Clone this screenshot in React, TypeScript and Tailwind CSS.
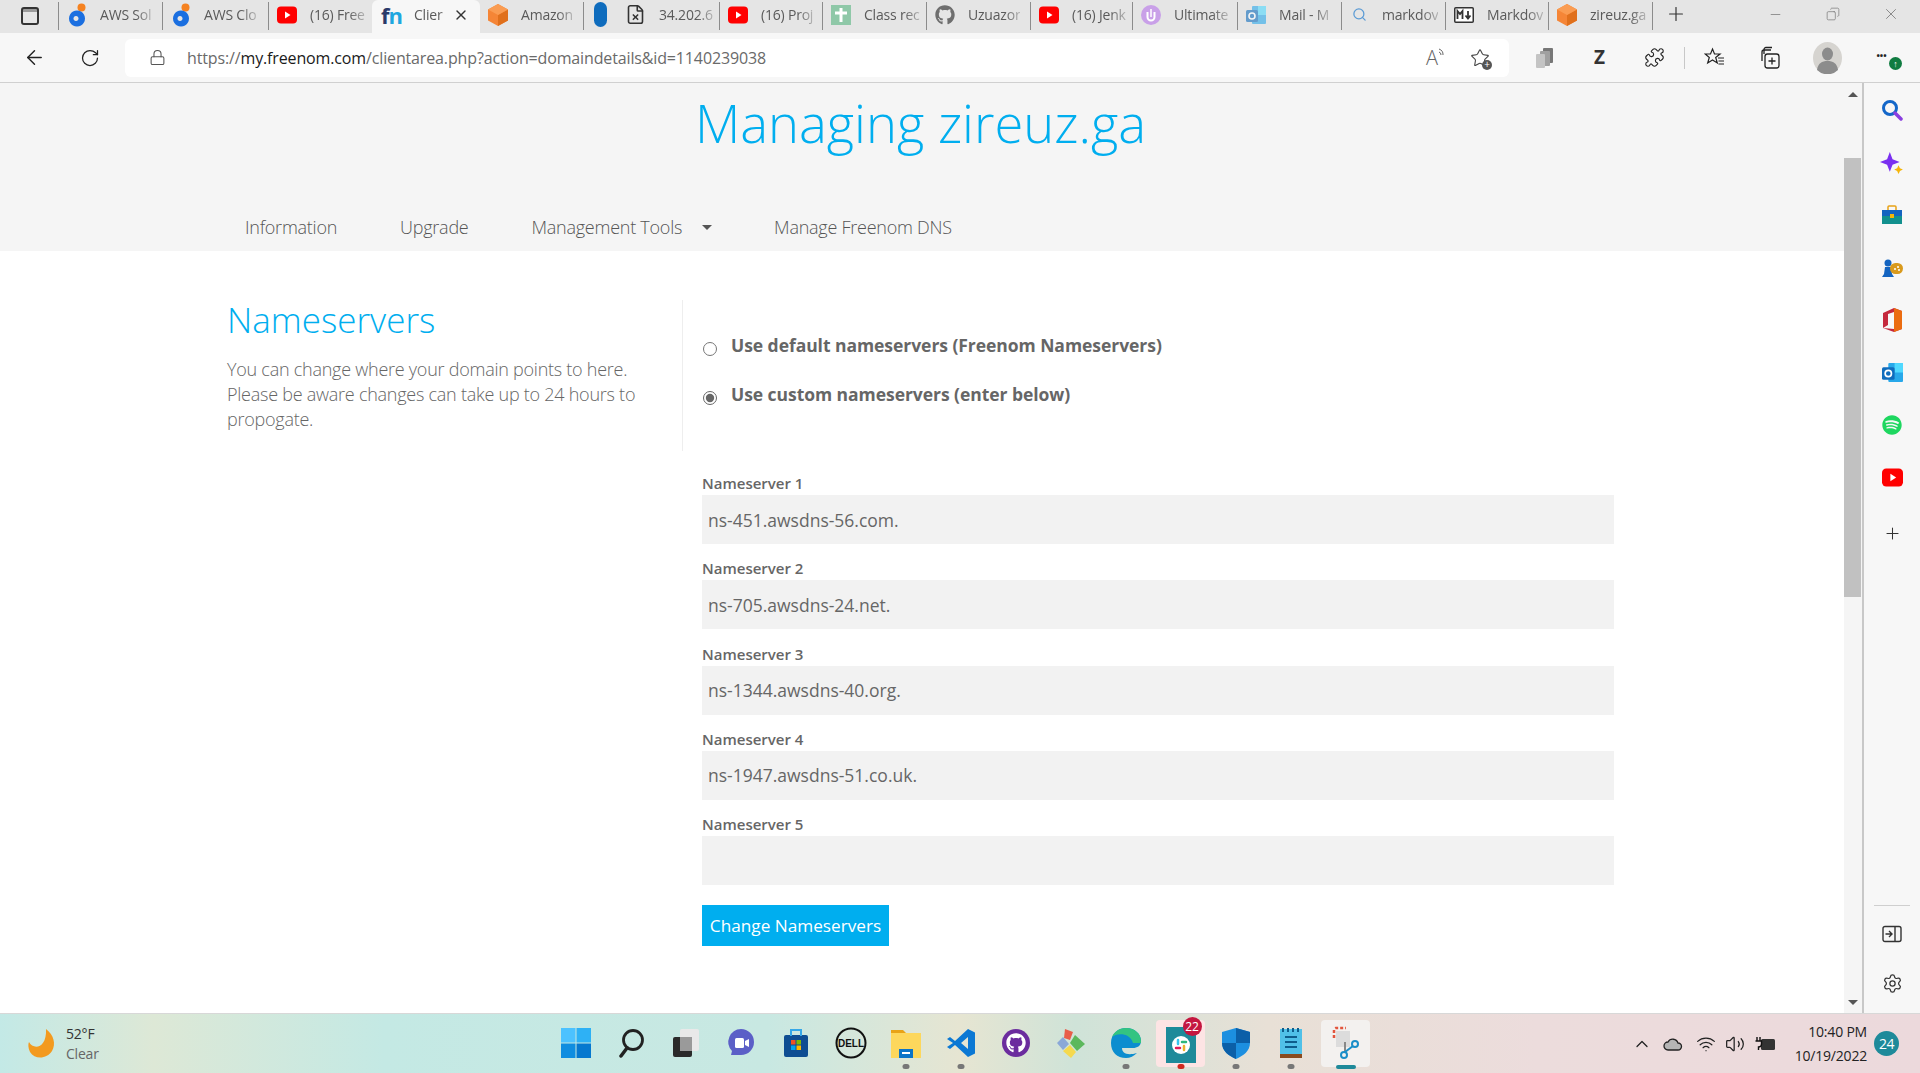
import React from "react";
import { ArrowLeft, RotateCw, Lock, Plus, X, Minus, Copy, Star, Puzzle, ChevronUp, Wifi, Volume2, Search, Settings, FileX } from "lucide-react";
import { FaGithub, FaSpotify } from "react-icons/fa";

const Yt = ({ s = 20 }: { s?: number }) => (
  <svg width={s} height={s} viewBox="0 0 20 20"><rect x="0" y="1.500" width="20" height="17" rx="4" fill="#f00" /><path d="M8 6.500l5.500 3.500L8 13.500z" fill="#fff" /></svg>
);
const Aws = () => (
  <svg width="20" height="24" viewBox="0 0 20 24"><circle cx="14.500" cy="4.500" r="4" fill="#f58220" /><path d="M10 7.500a8 8 0 1 0 .01 0z M9 13a2.500 2.500 0 1 1-.01 0z" fill="#1b6fe0" fillRule="evenodd" /></svg>
);
const Cube = () => (
  <svg width="20" height="22" viewBox="0 0 20 22"><path d="M10 0l10 5.500v11L10 22 0 16.500v-11z" fill="#f58536" /><path d="M10 11l10-5.500v11L10 22z" fill="#e0701c" /><path d="M10 0l10 5.500L10 11 0 5.500z" fill="#fa9c52" /></svg>
);
const Fn = () => (
  <span className="block text-[22px] font-bold leading-[28px] tracking-[-1px] font-['Open_Sans',sans-serif]"><span className="text-[#2a3a6a]">f</span><span className="text-[#1fa7e0]">n</span></span>
);
const Pill = () => <div className="w-[13px] h-[25px] rounded-full bg-[#0f6cbd] mr-[18px] ml-[2px]" />;
const ClassI = () => (
  <svg width="20" height="20" viewBox="0 0 20 20"><rect width="20" height="20" fill="#8fc8a8" /><path d="M10 3v14M4 8h12" stroke="#fff" strokeWidth="3" /></svg>
);
const Ultimate = () => (
  <svg width="20" height="20" viewBox="0 0 20 20"><circle cx="10" cy="10" r="10" fill="#c9a0e8" /><path d="M6.500 7v5a3.500 3.500 0 0 0 7 0V7" stroke="#fff" strokeWidth="2" fill="none" /><path d="M10 4v8" stroke="#fff" strokeWidth="1.500" /></svg>
);
const Outlook = ({ s = 20, faded = false }: { s?: number; faded?: boolean }) => (
  <svg width={s} height={s} viewBox="0 0 20 20" opacity={faded ? 0.6 : 1}><rect x="6" y="1" width="14" height="18" rx="1" fill="#28a8ea" /><rect x="12" y="1" width="8" height="9" fill="#50d9ff" /><rect x="0" y="5" width="12" height="12" rx="1.500" fill="#0f6cbd" /><circle cx="6" cy="11" r="3" fill="none" stroke="#fff" strokeWidth="1.600" /></svg>
);
const Md = () => (
  <svg width="20" height="16" viewBox="0 0 20 16"><rect x=".75" y=".75" width="18.500" height="14.500" rx="1" fill="#fff" stroke="#333" strokeWidth="1.500" /><path d="M3.500 12V4l2.500 3 2.500-3v8M14 4v7M11.500 8.500L14 11.500l2.500-3" fill="none" stroke="#333" strokeWidth="1.800" /></svg>
);

const tabs: { w: string; icon: React.ReactNode; label: string; active?: boolean }[] = [
  { w: "w-[104px]", icon: <Aws />, label: "AWS Sol" },
  { w: "w-[106px]", icon: <Aws />, label: "AWS Clo" },
  { w: "w-[104px]", icon: <Yt />, label: "(16) Free" },
  { w: "w-[108px]", icon: <Fn />, label: "Clier", active: true },
  { w: "w-[104px]", icon: <Cube />, label: "Amazon" },
  { w: "w-[136px]", icon: <><Pill /><FileX size={21} strokeWidth={1.800} className="text-[#333]" /></>, label: "34.202.6" },
  { w: "w-[103px]", icon: <Yt />, label: "(16) Proj" },
  { w: "w-[104px]", icon: <ClassI />, label: "Class rec" },
  { w: "w-[104px]", icon: <FaGithub size={20} className="text-[#6e6e6e]" />, label: "Uzuazor" },
  { w: "w-[102px]", icon: <Yt />, label: "(16) Jenk" },
  { w: "w-[105px]", icon: <Ultimate />, label: "Ultimate" },
  { w: "w-[104px]", icon: <Outlook faded />, label: "Mail - M" },
  { w: "w-[104px]", icon: <Search size={15} className="text-[#5b9bd5] mx-[2px]" />, label: "markdov" },
  { w: "w-[103px]", icon: <Md />, label: "Markdov" },
  { w: "w-[104px]", icon: <Cube />, label: "zireuz.ga" },
];

function TabBar() {
  return (
    <div className="h-[33px] flex items-stretch bg-[#e5e5e5] text-[14px] text-[#5a5a5a] shrink-0">
      <div className="w-[59px] flex items-center pl-[21px] border-r border-[#8c8c8c] mt-[2px] mb-[3px]">
        <div className="w-[18px] h-[18px] border-2 border-[#333] rounded-[3px] bg-[#9a9a9a] overflow-hidden"><div className="h-[11px] mt-[3px] bg-[#e5e5e5]" /></div>
      </div>
      {tabs.map((t, i) =>
        t.active ? (
          <div key={i} className={`${t.w} flex items-center pl-[9px] pr-[11px] pb-[4px] bg-[#f7f7f7] rounded-t-[6px] -ml-px`}>
            <span className="w-[28px] shrink-0">{t.icon}</span>
            <span className="flex-1 whitespace-nowrap ml-[5px] tracking-[-0.2px] [mask-image:linear-gradient(90deg,#000_60%,#0006)]">{t.label}</span>
            <X size={16} className="text-[#333] shrink-0" />
          </div>
        ) : (
          <div key={i} className={`${t.w} flex items-center pl-[8px] pb-[3px] mt-[2px] mb-[3px] ${tabs[i + 1]?.active ? "" : "border-r border-[#8c8c8c]"}`}>
            <span className="flex items-center shrink-0 mr-[13px]">{t.icon}</span>
            <span className="whitespace-nowrap tracking-[-0.2px] [mask-image:linear-gradient(90deg,#000_70%,#0005)]">{t.label}</span>
          </div>
        )
      )}
      <div className="w-[46px] flex items-center justify-center pb-[5px]"><Plus size={22} strokeWidth={1.300} className="text-[#333]" /></div>
      <div className="flex-1 flex items-center justify-end text-[#777] pb-[5px]">
        <div className="w-[58px] flex justify-center"><Minus size={15} strokeWidth={1.200} /></div>
        <div className="w-[58px] flex justify-center"><Copy size={14} strokeWidth={1.200} className="scale-x-[-1]" /></div>
        <div className="w-[58px] flex justify-center"><X size={18} strokeWidth={1.100} /></div>
      </div>
    </div>
  );
}

function ToolBar() {
  return (
    <div className="h-[50px] flex items-center bg-[#f7f7f7] border-b border-[#d0d0d0] shrink-0">
      <div className="w-[69px] flex justify-center"><ArrowLeft size={23} strokeWidth={1.500} className="text-[#222]" /></div>
      <div className="w-[42px] flex justify-center"><RotateCw size={20} strokeWidth={1.500} className="text-[#222]" /></div>
      <div className="w-[1384px] ml-[14px] h-[38px] bg-white rounded-[6px] flex items-center">
        <Lock size={17} strokeWidth={1.500} className="ml-[24px] text-[#555]" />
        <div className="ml-[21px] text-[16px] text-[#6a6a6a] font-['Open_Sans',sans-serif] flex-1 tracking-[-0.14px]">https://<span className="text-[#1a1a1a]">my.freenom.com</span>/clientarea.php?action=domaindetails&amp;id=1140239038</div>
        <span className="relative flex items-start mr-[24px] text-[#666]">
          <span className="text-[20px] font-light leading-[22px]">A</span>
          <svg width="8" height="10" viewBox="0 0 8 10" className="mt-[1px]"><path d="M1 1a6 6 0 0 1 4 6M1 4a3 3 0 0 1 2 3" fill="none" stroke="#666" strokeWidth="1" /></svg>
        </span>
        <span className="relative mr-[19px]"><Star size={20} strokeWidth={1.300} className="text-[#444]" /><span className="absolute -right-[2px] -bottom-[2px] w-[10px] h-[10px] rounded-full bg-[#555] text-white text-[10px] leading-[9px] text-center">+</span></span>
      </div>
      <div className="w-[55px] ml-[8px] flex justify-center">
        <svg width="20" height="22" viewBox="0 0 20 22"><rect x="8" y="1" width="10" height="15" rx="1" fill="#777" /><rect x="5" y="4" width="10" height="15" rx="1" fill="#a0a0a0" /><rect x="1" y="7" width="9" height="14" rx="1" fill="#c4c4c4" /></svg>
      </div>
      <div className="w-[55px] flex justify-center text-[19px] font-bold text-[#333] font-['Open_Sans',sans-serif]">Z</div>
      <div className="w-[55px] flex justify-center"><Puzzle size={21} strokeWidth={1.300} className="text-[#222]" /></div>
      <div className="w-px h-[22px] bg-[#c8c8c8] mx-[2px]" />
      <div className="w-[55px] flex justify-center">
        <svg width="22" height="22" viewBox="0 0 22 22" fill="none" stroke="#222" strokeWidth="1.200"><path d="M8.500 2l2 5h5.500l-4.300 3.500 1.600 5.500-4.800-3-4.800 3 1.600-5.500L1.200 7h5.300z" /><path d="M14 11h6M14.500 14h5.500M14.500 17h5.500" /></svg>
      </div>
      <div className="w-[55px] flex justify-center">
        <svg width="22" height="24" viewBox="0 0 22 24" fill="none" stroke="#222" strokeWidth="1.300"><path d="M3 15V6a2 2 0 0 1 2-2h7" /><rect x="6" y="8" width="14" height="14" rx="2.500" /><path d="M13 11.500v7M9.500 15h7" /><path d="M5 8V3.500a2 2 0 0 1 2-2h6" /></svg>
      </div>
      <div className="w-[55px] ml-[3px] flex justify-center">
        <svg width="29" height="32" viewBox="0 0 29 32"><ellipse cx="14.500" cy="16" rx="14.500" ry="16" fill="#d6d4d0" /><ellipse cx="14.500" cy="12" rx="5.500" ry="6.500" fill="#8c8c8c" /><path d="M4 28c1-7 5-9 10.500-9S24 21 25 28a15 15 0 0 1-21 0z" fill="#8c8c8c" /></svg>
      </div>
      <div className="w-[47px] flex justify-center relative text-[#222] font-bold text-[9px] leading-none">
        <span className="-mt-[4px] ml-[6px]">•••</span>
        <span className="absolute left-[34px] top-[2px] w-[13px] h-[13px] rounded-full bg-[#107c41] text-white text-[9px] leading-[13px] text-center">↑</span>
      </div>
    </div>
  );
}

const inputs = ["ns-451.awsdns-56.com.", "ns-705.awsdns-24.net.", "ns-1344.awsdns-40.org.", "ns-1947.awsdns-51.co.uk.", ""];

function Page() {
  return (
    <div className="flex-1 min-w-0 bg-white font-['Open_Sans',sans-serif] text-[#666] overflow-hidden">
      <div className="h-[168px] bg-[#f5f5f5]">
        <h1 className="text-center text-[52.500px] font-light text-[#00aeef] leading-[70px] pt-[5px] pr-[3px] h-[105px]">Managing zireuz.ga</h1>
        <nav className="flex items-center h-[63px] pl-[245px] pt-[16px] text-[18px] font-light text-[#555] tracking-[-0.25px]">
          <span>Information</span>
          <span className="ml-[63px]">Upgrade</span>
          <span className="ml-[63px]">Management Tools</span>
          <span className="ml-[20px] w-0 h-0 border-x-[5px] border-x-transparent border-t-[5px] border-t-[#555]" />
          <span className="ml-[62px]">Manage Freenom DNS</span>
        </nav>
      </div>
      <div className="flex pt-[49px]">
        <div className="w-[682px] pl-[227px] pr-[40px] shrink-0">
          <h2 className="text-[35px] font-light text-[#00aeef] leading-[40px]">Nameservers</h2>
          <p className="text-[18px] font-light leading-[25px] mt-[17px] tracking-[-0.25px] text-[#666]">You can change where your domain points to here. Please be aware changes can take up to 24 hours to propogate.</p>
        </div>
        <div className="flex-1 min-w-0">
          <div className="border-l border-[#eee] h-[151px] pl-[20px] pt-[32px] text-[17.500px] font-bold tracking-[-0.05px]">
            <label className="flex items-start h-[49px]">
              <input type="radio" name="ns" readOnly className="w-[14px] h-[14px] mt-[10px] accent-[#666]" />
              <span className="ml-[14px] leading-[26px]">Use default nameservers (Freenom Nameservers)</span>
            </label>
            <label className="flex items-start">
              <input type="radio" name="ns" defaultChecked className="w-[14px] h-[14px] mt-[10px] accent-[#666]" />
              <span className="ml-[14px] leading-[26px]">Use custom nameservers (enter below)</span>
            </label>
          </div>
          <div className="w-[912px] ml-[20px] mt-[21px]">
            {inputs.map((v, i) => (
              <div key={i} className="mb-[13.250px]">
                <div className="text-[15px] font-semibold leading-[23px] h-[23px]">Nameserver {i + 1}</div>
                <input readOnly value={v} className="block w-full h-[49px] bg-[#f2f2f2] px-[6px] text-[17.500px] text-[#666] outline-none" />
              </div>
            ))}
            <button className="mt-[7px] w-[187px] h-[41px] bg-[#00aeef] text-white text-[17.200px]">Change Nameservers</button>
          </div>
        </div>
      </div>
    </div>
  );
}

function ScrollBar() {
  return (
    <div className="w-[20px] shrink-0 bg-[#f5f5f5] border-r-2 border-[#c8c8c8] flex flex-col items-center pr-[1px]">
      <div className="h-[75px] pt-[9px] w-full flex justify-center"><div className="w-0 h-0 border-x-[5px] border-x-transparent border-b-[5px] border-b-[#555]" /></div>
      <div className="h-[439px] w-[17px] bg-[#c1c1c1]" />
      <div className="flex-1 w-full flex items-end justify-center pb-[8px]"><div className="w-0 h-0 border-x-[5px] border-x-transparent border-t-[5px] border-t-[#555]" /></div>
    </div>
  );
}

function SideBar() {
  const items: React.ReactNode[] = [
    <svg width="22" height="22" viewBox="0 0 22 22"><circle cx="9" cy="9" r="6.500" fill="none" stroke="#1467c9" strokeWidth="3" /><path d="M14 14l6 6" stroke="#8a3fe0" strokeWidth="3.500" strokeLinecap="round" /></svg>,
    <svg width="24" height="24" viewBox="0 0 22 22"><path d="M9 1l2.500 6.500L18 10l-6.500 2.500L9 19l-2.500-6.500L0 10l6.500-2.500z" fill="#7a2ff0" /><path d="M17 13l1.300 2.700L21 17l-2.700 1.300L17 21l-1.300-2.700L13 17l2.700-1.300z" fill="#f5b50a" /></svg>,
    <svg width="22" height="20" viewBox="0 0 22 20"><rect x="7" y="1" width="8" height="5" rx="1" fill="none" stroke="#e8a317" strokeWidth="1.500" /><rect x="1" y="5" width="20" height="6" fill="#1464c0" /><rect x="1" y="11" width="20" height="8" fill="#12908e" /><rect x="9" y="9" width="4" height="4" fill="#f5b50a" /></svg>,
    <svg width="22" height="20" viewBox="0 0 22 20"><circle cx="7" cy="5" r="3.500" fill="#1464c0" /><path d="M4 9h6l1 7 2 3H1l2-3z" fill="#1464c0" /><rect x="9" y="5" width="13" height="11" rx="5.500" fill="#d99a1c" /><circle cx="17" cy="9" r="1" fill="#fff" /><circle cx="14" cy="11" r="1" fill="#fff" /><circle cx="18" cy="12" r="1" fill="#fff" /></svg>,
    <svg width="21" height="24" viewBox="0 0 21 24"><path d="M12 0l8 3v18l-8 3-11-4 11 1V4L6 6v11l-5 3V5z" fill="#c5283d" /><path d="M12 0l8 3v18l-8 3z" fill="#eb6c10" /></svg>,
    <Outlook s={21} />,
    <FaSpotify size={20} className="text-[#1ed760]" />,
    <Yt s={21} />,
    <Plus size={19} strokeWidth={1.300} className="text-[#333]" />,
  ];
  return (
    <div className="w-[56px] shrink-0 bg-[#f7f7f7] flex flex-col items-center pt-[1px]">
      <div className="flex flex-col items-center">
        {items.map((n, i) => (
          <div key={i} className={`${i === 8 ? "h-[58px]" : "h-[52.500px]"} w-[56px] flex items-center justify-center`}>{n}</div>
        ))}
      </div>
      <div className="flex-1" />
      <div className="w-[36px] h-px bg-[#cfcfcf]" />
      <div className="h-[52px] mt-[2px] flex items-center">
        <svg width="20" height="18" viewBox="0 0 20 18" fill="none" stroke="#333" strokeWidth="1.400"><rect x="1" y="1.500" width="18" height="15" rx="2" /><path d="M13 1.500v15M3.500 9h6M7 6l3 3-3 3" /></svg>
      </div>
      <div className="h-[53px] pb-[6px] flex items-center"><Settings size={21} strokeWidth={1.400} className="text-[#333]" /></div>
    </div>
  );
}

function TaskBar() {
  const Win = (
    <svg width="30" height="30" viewBox="0 0 30 30"><rect width="14.500" height="14.500" fill="#4cc2ff" /><rect x="15.500" width="14.500" height="14.500" fill="#2eb1f5" /><rect y="15.500" width="14.500" height="14.500" fill="#0f8de0" /><rect x="15.500" y="15.500" width="14.500" height="14.500" fill="#0678cf" /></svg>
  );
  const Mag = (
    <svg width="30" height="30" viewBox="0 0 30 30"><circle cx="17" cy="12" r="9.500" fill="none" stroke="#222" strokeWidth="2.800" /><path d="M11 20l-6 8" stroke="#222" strokeWidth="3.500" strokeLinecap="round" /></svg>
  );
  const TV = (
    <svg width="30" height="30" viewBox="0 0 30 30"><rect x="9" y="1" width="19" height="22" rx="2" fill="#e9e9e9" /><rect x="2" y="9" width="19" height="20" rx="2" fill="#2a2a2a" /><rect x="9" y="9" width="12" height="14" fill="#9a9a9a" /></svg>
  );
  const Chat = (
    <svg width="30" height="30" viewBox="0 0 30 30"><path d="M15 1a13 13 0 0 1 0 26H5l1-4A13 13 0 0 1 15 1z" fill="#5b5fc7" /><rect x="9" y="10" width="9" height="10" rx="1.500" fill="#fff" /><path d="M19 13l4-2v8l-4-2z" fill="#fff" /></svg>
  );
  const Store = (
    <svg width="30" height="30" viewBox="0 0 30 30"><rect x="3" y="7" width="24" height="22" rx="2" fill="#0e4d92" /><path d="M10 8V2h10v6" fill="none" stroke="#35a7e8" strokeWidth="2" /><rect x="10" y="12" width="4.500" height="4.500" fill="#f25022" /><rect x="15.500" y="12" width="4.500" height="4.500" fill="#7fba00" /><rect x="10" y="17.500" width="4.500" height="4.500" fill="#00a4ef" /><rect x="15.500" y="17.500" width="4.500" height="4.500" fill="#ffb900" /></svg>
  );
  const Dell = (
    <svg width="32" height="32" viewBox="0 0 32 32"><circle cx="16" cy="16" r="14.500" fill="none" stroke="#111" strokeWidth="2" /><text x="16" y="19.500" textAnchor="middle" fontSize="10" fontWeight="700" fontFamily="Liberation Sans" fill="#111">DELL</text></svg>
  );
  const Folder = (
    <svg width="32" height="30" viewBox="0 0 32 30"><path d="M1 2h12l3 3v4H1z" fill="#e8a317" /><rect x="1" y="5" width="30" height="25" fill="#fdd75c" /><rect x="9" y="21" width="14" height="9" fill="#0b74c8" /><rect x="12" y="24" width="8" height="2" fill="#fff" /></svg>
  );
  const Code = (
    <svg width="30" height="30" viewBox="0 0 30 30"><path d="M22 1l7 3.500v21L22 29 9 17l-5 4-3-2 6-4-6-4 3-2 5 4zM22 9l-7 6 7 6z" fill="#0b78d4" fillRule="evenodd" /></svg>
  );
  const Gh = (
    <svg width="30" height="30" viewBox="0 0 30 30"><circle cx="15" cy="15" r="14" fill="#6b2c9e" /><foreignObject x="5" y="5" width="20" height="20"><FaGithub size={20} color="#fff" /></foreignObject></svg>
  );
  const Kr = (
    <svg width="32" height="32" viewBox="0 0 32 32"><path d="M10 2l8 3-3 8-6-2z" fill="#e85d4a" /><path d="M20 8l10 9-8 7-7-8z" fill="#5cb85c" /><path d="M2 16l6-6 6 7-6 6z" fill="#8aa8d8" /><path d="M8 24l7-6 6 7-5 6z" fill="#f5d94e" /></svg>
  );
  const Edge = (
    <svg width="32" height="32" viewBox="0 0 32 32"><path d="M16 1c9 0 15 6 15 13 0 5-4 7-8 7H12c0 5 5 8 15 5-3 3-7 5-11 5C7 31 1 25 1 16S8 1 16 1z" fill="#0c8dcf" /><path d="M31 14c0-7-6-13-15-13C9 1 4 5 2 10c4-4 18-5 21 6h8z" fill="#33c481" /></svg>
  );
  const Slack = (
    <div className="relative w-[30px] h-[36px] bg-[#1e8a9a] flex items-center justify-center mt-[4px]">
      <svg width="18" height="18" viewBox="0 0 18 18"><circle cx="9" cy="9" r="9" fill="#fff" /><path d="M6 4v4" strokeWidth="2.500" strokeLinecap="round" stroke="#36c5f0" /><path d="M12 10v4" strokeWidth="2.500" strokeLinecap="round" stroke="#ecb22e" /><path d="M4 12h4" strokeWidth="2.500" strokeLinecap="round" stroke="#e01e5a" /><path d="M10 6h4" strokeWidth="2.500" strokeLinecap="round" stroke="#2eb67d" /></svg>
      <span className="absolute -right-[6px] -top-[10px] w-[19px] h-[19px] rounded-full bg-[#c4163f] text-white text-[12px] leading-[19px] text-center">22</span>
    </div>
  );
  const Shield = (
    <svg width="30" height="32" viewBox="0 0 30 32"><path d="M15 1l14 4v11c0 8-7 13-14 16C8 29 1 24 1 16V5z" fill="#1c8fe0" /><path d="M15 1l14 4v11H15zM15 16v16C8 29 1 24 1 16z" fill="#0b5fa8" /></svg>
  );
  const Notes = (
    <svg width="24" height="32" viewBox="0 0 24 32"><rect x="1" y="2" width="22" height="28" fill="#50c0e8" /><rect x="1" y="27" width="22" height="4" fill="#8a4b1f" /><path d="M6 10h12M6 15h12M6 20h12" stroke="#0e5d8c" strokeWidth="2" /><path d="M4 1v4M9 1v4M14 1v4M19 1v4" stroke="#0e5d8c" strokeWidth="2" /></svg>
  );
  const Snip = (
    <svg width="30" height="34" viewBox="0 0 30 34"><path d="M3 12V4a2 2 0 0 1 2-2h10" fill="none" stroke="#e2553d" strokeWidth="2.500" strokeDasharray="3 2" /><rect x="5" y="5" width="14" height="16" fill="#dcdcdc" /><path d="M14 16v10" stroke="#888" strokeWidth="2" /><circle cx="13" cy="29" r="3" fill="none" stroke="#1a8ec8" strokeWidth="2" /><circle cx="24" cy="18" r="3" fill="none" stroke="#1a8ec8" strokeWidth="2" /><path d="M14 26l8-6" stroke="#1a8ec8" strokeWidth="2" /></svg>
  );
  const apps: { n: React.ReactNode; dot?: string; bg?: string }[] = [
    { n: Win }, { n: Mag }, { n: TV }, { n: Chat }, { n: Store }, { n: Dell },
    { n: Folder, dot: "bg-[#777]" }, { n: Code, dot: "bg-[#777]" }, { n: Gh }, { n: Kr },
    { n: Edge, dot: "bg-[#777]" }, { n: Slack, dot: "bg-[#d0281e]", bg: "bg-[#fde4e4]" },
    { n: Shield, dot: "bg-[#777]" }, { n: Notes, dot: "bg-[#777]" }, { n: Snip, bg: "bg-[#f3f1ef]" },
  ];
  return (
    <div className="h-[59px] shrink-0 flex items-center bg-[linear-gradient(90deg,#c3e9e6_0%,#dde8d6_8%,#c4e9e4_20%,#c8e8e2_40%,#e6e5d2_50%,#cfe3d8_56%,#e8e0d6_66%,#ecdcdc_80%,#ecd9dc_100%)] font-['Open_Sans',sans-serif] text-[#333]">
      <div className="w-[548px] flex items-center pl-[28px] shrink-0">
        <svg width="30" height="32" viewBox="0 0 30 32"><path d="M18 1c8 6 10 15 6 22-5 8-17 9-22 1C0 20 0 16 1 14c4 8 18 7 17-13z" fill="#f39a1f" /></svg>
        <div className="ml-[8px] text-[14px] leading-[20px] tracking-[-0.2px]">
          <div>52°F</div>
          <div className="text-[#666]">Clear</div>
        </div>
      </div>
      {apps.map((a, i) => (
        <div key={i} className="w-[55px] h-[59px] flex items-center justify-center shrink-0 relative">
          {a.bg ? <div className={`absolute inset-x-[3px] inset-y-[6px] rounded-[4px] ${a.bg}`} /> : null}
          <div className="relative -mt-[1px] flex items-center justify-center">{a.n}</div>
          {a.dot ? <div className={`absolute bottom-[4px] left-1/2 -translate-x-1/2 w-[7px] h-[5px] rounded-full ${a.dot}`} /> : null}
          {i === 14 ? <div className="absolute bottom-[4px] left-1/2 -translate-x-1/2 w-[20px] h-[4px] rounded-full bg-[#1e8a9a]" /> : null}
        </div>
      ))}
      <div className="flex-1 flex items-center justify-end pr-[21px] text-[#222]">
        <ChevronUp size={20} strokeWidth={1.500} />
        <svg width="20" height="18" viewBox="0 0 20 18" className="ml-[11px]"><path d="M5 15a4 4 0 0 1 0-8 5.500 5.500 0 0 1 10 1 3.500 3.500 0 0 1 0 7z" fill="#b5b5b5" stroke="#222" strokeWidth="1.300" /></svg>
        <Wifi size={20} strokeWidth={1.500} className="ml-[13px]" />
        <Volume2 size={20} strokeWidth={1.500} className="ml-[9px]" />
        <svg width="22" height="20" viewBox="0 0 22 20" className="ml-[9px]"><rect x="7" y="5" width="14" height="11" rx="1.500" fill="#333" /><path d="M3 3v4M6 3v4M1.500 7h6v3a3 3 0 0 1-3 3v3" fill="none" stroke="#111" strokeWidth="1.400" /></svg>
        <div className="ml-[19px] text-[14px] leading-[24px] text-right tracking-[-0.2px]">
          <div>10:40 PM</div>
          <div>10/19/2022</div>
        </div>
        <div className="ml-[7px] w-[25px] h-[25px] rounded-full bg-[#1e8a9a] text-white text-[14px] leading-[25px] text-center tracking-[-0.5px]">24</div>
      </div>
    </div>
  );
}

export default function App() {
  return (
    <div className="w-[1920px] h-[1073px] flex flex-col overflow-hidden bg-white font-['Open_Sans',sans-serif]">
      <TabBar />
      <ToolBar />
      <div className="flex-1 min-h-0 flex border-b border-[#d8d8d8]">
        <Page />
        <ScrollBar />
        <SideBar />
      </div>
      <TaskBar />
    </div>
  );
}
